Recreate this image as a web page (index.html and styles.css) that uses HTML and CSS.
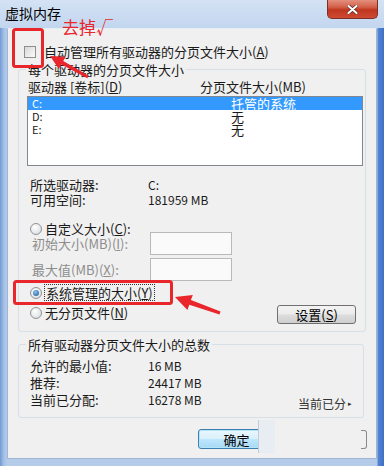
FILE: index.html
```html
<!DOCTYPE html>
<html lang="zh-CN">
<head>
    <meta charset="UTF-8">
    <meta name="viewport" content="width=device-width, initial-scale=1.0">
    <title>虚拟内存</title>
    <link rel="stylesheet" href="styles.css">
</head>
<body>
    <div class="window">
        <div class="titlebar">
            <span class="title">虚拟内存</span>
            <div class="close">
                <svg width="11" height="9" viewBox="0 0 11 9">
                    <path d="M1.5 1 L9.5 8 M9.5 1 L1.5 8" stroke="#5a2018" stroke-width="3.4" stroke-linecap="round"/>
                    <path d="M1.5 1 L9.5 8 M9.5 1 L1.5 8" stroke="#fff" stroke-width="2.2" stroke-linecap="round"/>
                </svg>
            </div>
        </div>
        <div class="client">
            <label class="check-row"><span class="checkbox"></span><span>自动管理所有驱动器的分页文件大小(<u>A</u>)</span></label>

            <fieldset class="group group-drives">
                <legend>每个驱动器的分页文件大小</legend>
                <div class="list-head">
                    <span class="col-drive">驱动器 [卷标](<u>D</u>)</span>
                    <span>分页文件大小(MB)</span>
                </div>
                <ul class="drive-list">
                    <li class="selected"><span class="col-drive">C:</span><span>托管的系统</span></li>
                    <li><span class="col-drive">D:</span><span>无</span></li>
                    <li><span class="col-drive">E:</span><span>无</span></li>
                </ul>
                <div class="info">
                    <div class="info-row"><span class="info-label">所选驱动器:</span><span class="num">C:</span></div>
                    <div class="info-row"><span class="info-label">可用空间:</span><span class="num">181959 MB</span></div>
                </div>

                <div class="radio-row custom-size"><span class="radio"></span><span>自定义大小(<u>C</u>):</span></div>
                <div class="fields">
                    <div class="field-row"><span class="field-label">初始大小(MB)(<u>I</u>):</span><span class="field-input"></span></div>
                    <div class="field-row"><span class="field-label">最大值(MB)(<u>X</u>):</span><span class="field-input"></span></div>
                </div>
                <div class="radio-row system-size"><span class="radio on"></span><span class="focus">系统管理的大小(<u>Y</u>)</span></div>
                <div class="option-row">
                    <div class="radio-row"><span class="radio"></span><span>无分页文件(<u>N</u>)</span></div>
                    <button class="btn btn-set">设置(<u>S</u>)</button>
                </div>
            </fieldset>

            <fieldset class="group group-total">
                <legend>所有驱动器分页文件大小的总数</legend>
                <div class="totals">
                    <div class="total-row"><span class="info-label">允许的最小值:</span><span class="num">16 MB</span></div>
                    <div class="total-row"><span class="info-label">推荐:</span><span class="num">24417 MB</span></div>
                    <div class="total-row">
                        <span class="info-label">当前已分配:</span><span class="num">16278 MB</span>
                        <span class="peek"><span>当前已分</span><span class="peek-arrow">▸</span></span>
                    </div>
                </div>
            </fieldset>

            <div class="buttons">
                <button class="btn btn-ok">确定</button>
                <span class="cancel-edge"></span>
            </div>
        </div>

        <!-- 标注 -->
        <div class="patch"></div>
        <span class="note">去掉√</span>
        <svg class="marks" width="384" height="466" viewBox="0 0 384 466">
            <rect x="13.5" y="29.5" width="29" height="37" rx="2" fill="none" stroke="#e8262c" stroke-width="3"/>
            <rect x="14.5" y="281.5" width="157" height="22" rx="2" fill="none" stroke="#e8262c" stroke-width="3"/>
            <polygon points="50,56 65.6,56.7 63.2,61 88.7,75.7 87.3,78.3 61.3,64.5 58.9,68.9" fill="#e8262c"/>
            <polygon points="175,297 192.8,294.9 190.9,300 220.5,311.6 219.5,314.4 189.3,304.8 187.4,309.9" fill="#e8262c"/>
        </svg>
    </div>
</body>
</html>
```

FILE: styles.css
```css
body {
    margin: 0;
    font-family: "Noto Sans CJK SC", "Noto Sans", sans-serif;
    font-size: 13px;
    color: #1a1a1a;
    text-autospace: no-autospace;
}
.window {
    position: relative;
    width: 384px;
    height: 466px;
    display: flex;
    flex-direction: column;
    overflow: hidden;
    background: linear-gradient(to right, #7199d3 0, #a6c1e7 4px, #b4cbea 7px, #b4cbea 377px, #5585d2 378px, #3f6fc4 384px);
}
.titlebar {
    flex: none;
    height: 28px;
    display: flex;
    justify-content: space-between;
    align-items: flex-start;
    background: linear-gradient(to bottom, #d4e2f4, #c2d6ef);
}
.title {
    padding: 5px 0 0 5px;
    font-size: 14px;
    line-height: 17px;
    color: #000;
}
.close {
    width: 51px;
    height: 19px;
    margin-right: 6px;
    box-sizing: border-box;
    display: flex;
    align-items: center;
    justify-content: center;
    border: 1px solid #7b2f25;
    border-top: none;
    border-radius: 0 0 5px 5px;
    background: linear-gradient(to bottom, #e3907e 0, #d35f48 40%, #bf3620 55%, #cf4a33 100%);
}
.client {
    flex: 1;
    margin: 0 7px 7px;
    background: #f0f0f0;
    border: 1px solid #9fb5d3;
    border-top-color: #e4ecf6;
}
.check-row {
    display: flex;
    align-items: center;
    gap: 8px;
    margin: 15px 0 0 16px;
    line-height: 15px;
}
.checkbox {
    width: 12px;
    height: 12px;
    box-sizing: border-box;
    border: 1px solid #8e8f8f;
    background: linear-gradient(135deg, #d8d8d8, #fbfbfb);
}
.group {
    margin: 0 0 0 10px;
    padding: 0;
    min-inline-size: 0;
    box-sizing: border-box;
    border: 1px solid #d5dfe5;
    border-radius: 3px;
}
.group legend {
    margin-left: 7px;
    padding: 0 2px;
    line-height: 15px;
}
.group-drives {
    width: 348px;
    margin-top: 3px;
    padding-bottom: 7px;
}
.group-total {
    width: 346px;
    margin-top: 5px;
    padding-bottom: 9px;
}
.list-head {
    display: flex;
    margin: 2px 0 0 9px;
    line-height: 15px;
}
.list-head .col-drive {
    width: 172px;
}
.drive-list {
    list-style: none;
    margin: 2px 0 0 8px;
    padding: 0;
    width: 336px;
    height: 70px;
    box-sizing: border-box;
    border: 1px solid #828790;
    background: #fff;
}
.drive-list li {
    display: flex;
    height: 13px;
    line-height: 13px;
    padding-left: 4px;
}
.drive-list li .col-drive {
    width: 199px;
    font-size: 11px;
}
.drive-list li.selected {
    background: #3399ff;
    color: #fff;
}
.info {
    margin: 11px 0 0 11px;
}
.info-row, .total-row {
    display: flex;
    line-height: 15px;
}
.info-label {
    width: 118px;
}
.num {
    font-size: 12px;
}
.radio-row {
    display: flex;
    align-items: center;
    gap: 3px;
    margin-left: 11px;
    line-height: 15px;
}
.radio {
    position: relative;
    width: 12px;
    height: 12px;
    box-sizing: border-box;
    border-radius: 50%;
    border: 1px solid #939393;
    background: radial-gradient(circle at 40% 35%, #ffffff, #d3d7dc);
}
.radio.on::after {
    content: "";
    position: absolute;
    left: 2px;
    top: 2px;
    width: 6px;
    height: 6px;
    border-radius: 50%;
    background: radial-gradient(circle at 40% 35%, #8cc3f0, #17528f);
}
.custom-size {
    margin-top: 14px;
}
.fields {
    display: flex;
    flex-direction: column;
    gap: 3px;
    margin: -4px 0 0 13px;
    color: #8d8d8d;
}
.field-row {
    display: flex;
    align-items: center;
}
.field-label {
    width: 118px;
    line-height: 15px;
}
.field-input {
    width: 82px;
    height: 23px;
    box-sizing: border-box;
    border: 1px solid #b9b9b9;
    background: #fafafa;
}
.system-size {
    margin-top: 4px;
}
.focus {
    outline: 1px dotted #333;
    padding: 0 1px;
}
.option-row {
    display: flex;
    justify-content: space-between;
    align-items: flex-start;
    margin-top: 5px;
}
.btn {
    height: 19px;
    padding: 0;
    box-sizing: border-box;
    border: 1px solid #707070;
    border-radius: 3px;
    background: linear-gradient(to bottom, #f3f3f3 0, #ebebeb 48%, #dddddd 52%, #cfcfcf 100%);
    font: inherit;
    line-height: 17px;
    color: #000;
}
.btn-set {
    width: 79px;
    margin-right: 9px;
}
.totals {
    margin: 5px 0 0 11px;
}
.total-row {
    line-height: 17px;
}
.peek {
    display: flex;
    align-items: center;
    align-self: flex-end;
    margin: 0 11px -2px auto;
    font-size: 12px;
    line-height: 13px;
    color: #333;
}
.peek-arrow {
    font-size: 7px;
    margin-left: 2px;
}
.buttons {
    display: flex;
    justify-content: space-between;
    align-items: flex-start;
    margin-top: 11px;
    padding: 0 9px 0 190px;
}
.btn-ok {
    width: 77px;
    height: 20px;
    border-color: #3c7fb1;
    box-shadow: inset 0 0 0 1px #b4e4f8;
    background: linear-gradient(to bottom, #eaf6fd 0, #d9f0fc 48%, #bee6fd 52%, #a7d9f5 100%);
}
.cancel-edge {
    width: 5px;
    height: 17px;
    margin-top: 1px;
    border: 1px solid #8a8a8a;
    border-left: none;
    border-radius: 0 3px 3px 0;
}
.patch {
    position: absolute;
    left: 258px;
    top: 420px;
    width: 16px;
    height: 33px;
    border-left: 1px solid #c6cbd1;
    background: #e7edf2;
}
.note {
    position: absolute;
    left: 62px;
    top: 17px;
    font-size: 17px;
    line-height: 20px;
    color: #e8262c;
}
.marks {
    position: absolute;
    left: 0;
    top: 0;
    pointer-events: none;
}
```
